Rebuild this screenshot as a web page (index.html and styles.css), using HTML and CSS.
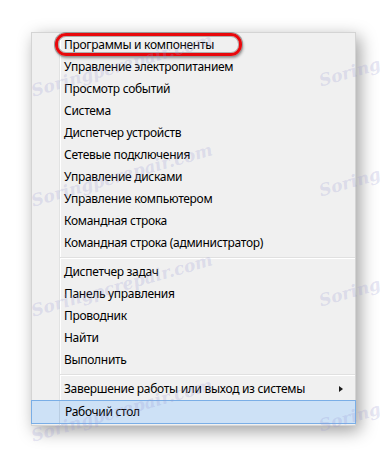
FILE: index.html
```html
<!DOCTYPE html>
<html lang="ru">
<head>
  <meta charset="UTF-8" />
  <title>Меню Win+X</title>
  <link rel="stylesheet" href="styles.css">
</head>
<body>
  <div class="menu">
    <div class="group">
      <div class="item">Программы и компоненты</div>
      <div class="item">Управление электропитанием</div>
      <div class="item">Просмотр событий</div>
      <div class="item">Система</div>
      <div class="item">Диспетчер устройств</div>
      <div class="item">Сетевые подключения</div>
      <div class="item">Управление дисками</div>
      <div class="item">Управление компьютером</div>
      <div class="item">Командная строка</div>
      <div class="item">Командная строка (администратор)</div>
    </div>
    <div class="sep"></div>
    <div class="group">
      <div class="item">Диспетчер задач</div>
      <div class="item">Панель управления</div>
      <div class="item">Проводник</div>
      <div class="item">Найти</div>
      <div class="item">Выполнить</div>
    </div>
    <div class="sep"></div>
    <div class="group">
      <div class="item has-sub">Завершение работы или выход из системы<span class="arrow"></span></div>
      <div class="item active">Рабочий стол</div>
    </div>
    <div class="marker"></div>
  </div>

  <div class="wm wm-1">Soringpcrepair.com</div>
  <div class="wm wm-2">Soring</div>
  <div class="wm wm-3">Soringpcrepair.com</div>
  <div class="wm wm-4">Soring</div>
  <div class="wm wm-5">Soringpcrepair.com</div>
  <div class="wm wm-6">Soring</div>
  <div class="wm wm-7">Soringpcrepair.com</div>
  <div class="wm wm-8">Soring</div>
</body>
</html>
```

FILE: styles.css
```css
* { box-sizing: border-box; }

body {
  margin: 0;
  background: #ffffff;
  font-family: 'Noto Sans', 'Open Sans', sans-serif;
  font-size: 12px;
  letter-spacing: -0.3px;
  color: #000000;
  position: relative;
  height: 456px;
  overflow: hidden;
}

.menu {
  position: relative;
  margin: 32px 0 0 31px;
  width: 325px;
  padding: 1px 0 2px;
  background: #f0f0f0;
  border: 1px solid #d4d4d4;
  box-shadow: 4px 5px 16px rgba(0, 0, 0, 0.38);
  background-image: linear-gradient(90deg, transparent 27px, #e2e3e3 27px, #e2e3e3 28px, #ffffff 28px, #ffffff 29px, transparent 29px);
}

.item {
  height: 22px;
  line-height: 22px;
  padding-left: 32px;
  display: flex;
  align-items: center;
  white-space: nowrap;
}

.item.has-sub {
  justify-content: space-between;
  padding-right: 12px;
}

.arrow {
  width: 0;
  height: 0;
  border-top: 3.5px solid transparent;
  border-bottom: 3.5px solid transparent;
  border-left: 4px solid #1a1a1a;
}

.item.active {
  height: 24px;
  margin: 0 -1px -1px;
  padding-left: 33px;
  background: #cde1f6;
  border: 1px solid #7aaee6;
  background-image: linear-gradient(90deg, transparent 27px, #b9cde2 27px, #b9cde2 28px, transparent 28px);
}

.sep {
  height: 7px;
  margin-left: 28px;
  background: linear-gradient(#e0e0e0, #e0e0e0) center 3px / 100% 1px no-repeat;
  position: relative;
}

.sep::after {
  content: "";
  position: absolute;
  left: 0;
  right: 0;
  top: 4px;
  height: 1px;
  background: #ffffff;
}

.marker {
  position: absolute;
  left: 23px;
  top: 0;
  width: 187px;
  height: 23px;
  border: 3px solid #e8080c;
  border-radius: 11px;
  box-shadow: 0 0 0 1px #9a9a9a, 1px 2px 3px rgba(0, 0, 0, 0.4), inset 0 0 0 1px #b0b0b0;
}

.wm {
  position: absolute;
  font-family: 'DejaVu Serif', serif;
  font-style: italic;
  font-weight: bold;
  font-size: 17px;
  letter-spacing: 0;
  color: rgba(150, 150, 210, 0.24);
  transform: rotate(-16deg);
  pointer-events: none;
  white-space: nowrap;
}

.wm-1 { left: 28px; top: 55px; }
.wm-2 { left: 318px; top: 62px; }
.wm-3 { left: 28px; top: 165px; }
.wm-4 { left: 318px; top: 172px; }
.wm-5 { left: 28px; top: 275px; }
.wm-6 { left: 318px; top: 282px; }
.wm-7 { left: 28px; top: 400px; }
.wm-8 { left: 318px; top: 407px; }
```
